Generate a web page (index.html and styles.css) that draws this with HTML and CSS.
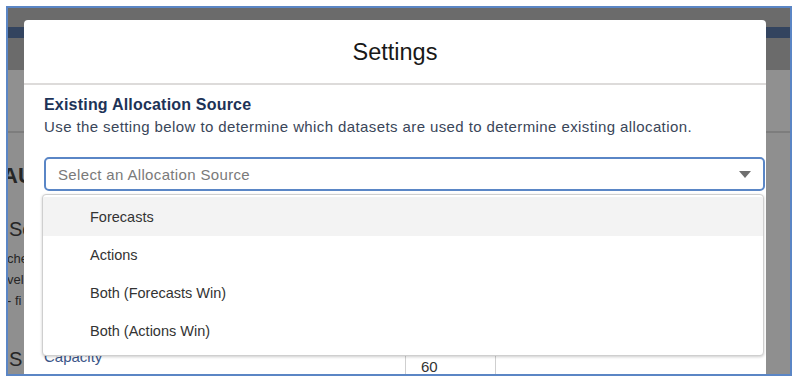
FILE: index.html
```html
<!DOCTYPE html>
<html lang="en">
<head>
  <meta charset="UTF-8">
  <meta name="viewport" content="width=device-width, initial-scale=1.0">
  <title>Settings</title>
  <link rel="stylesheet" href="styles.css">
</head>
<body>
  <div class="frame">

    <!-- page behind the modal (dimmed) -->
    <div class="page">
      <div class="page-top">
        <div class="page-nav"></div>
      </div>
      <div class="page-sub"></div>
      <div class="page-body">
        <div class="page-title">AU</div>
        <div class="page-section">Se</div>
        <div class="page-line">che</div>
        <div class="page-line">vel</div>
        <div class="page-line">- fi</div>
        <div class="page-section last">S</div>
      </div>
    </div>

    <!-- modal -->
    <div class="modal">
      <div class="modal-header">Settings</div>
      <div class="modal-body">
        <div class="field-title">Existing Allocation Source</div>
        <div class="field-help">Use the setting below to determine which datasets are used to determine existing allocation.</div>

        <div class="combo">
          <div class="combo-input">
            <span>Select an Allocation Source</span>
            <span class="combo-arrow"></span>
          </div>
          <ul class="combo-list">
            <li class="active">Forecasts</li>
            <li>Actions</li>
            <li>Both (Forecasts Win)</li>
            <li>Both (Actions Win)</li>
          </ul>
        </div>

        <div class="cap-row">
          <div class="cap-label">Capacity</div>
          <div class="cap-cell">60</div>
          <div class="cap-rest"></div>
        </div>
      </div>
    </div>

  </div>
</body>
</html>
```

FILE: styles.css
```css
body {
  margin: 0;
  background: #fff;
  font-family: "Liberation Sans", Arial, sans-serif;
}

.frame {
  position: relative;
  margin: 6px;
  width: 786px;
  height: 370px;
  box-sizing: border-box;
  border: 2px solid #5b86c5;
  overflow: hidden;
  background: #8f8f8f;
}

/* dimmed page */
.page-top {
  height: 62px;
  background: #6b6b6b;
  padding-top: 19px;
  box-sizing: border-box;
}

.page-nav {
  height: 11px;
  background: #33445f;
}

.page-sub {
  height: 61px;
  border-bottom: 2px solid #7d7d7d;
  background: #909090;
}

.page-body {
  padding-left: 1px;
  color: #262626;
}

.page-title {
  font-size: 22px;
  font-weight: bold;
  margin-top: 30px;
  margin-left: -7px;
}

.page-section {
  font-size: 20px;
  margin-top: 29px;
}

.page-line {
  font-size: 13px;
  line-height: 21px;
  margin-left: -2px;
}

.page-section + .page-line {
  margin-top: 7px;
}

.page-section.last {
  margin-top: 37px;
}

/* modal */
.modal {
  position: absolute;
  left: 16px;
  top: 12px;
  width: 742px;
  height: 380px;
  background: #fff;
  border-radius: 4px;
}

.modal-header {
  height: 65px;
  border-bottom: 2px solid #dddbda;
  display: flex;
  align-items: center;
  justify-content: center;
  padding-top: 2px;
  box-sizing: border-box;
  font-size: 23.5px;
  color: #181818;
}

.modal-body {
  padding: 10px 1px 0 20px;
}

.field-title {
  font-size: 16px;
  font-weight: bold;
  line-height: 20px;
  letter-spacing: 0.2px;
  color: #1d3357;
}

.field-help {
  font-size: 15px;
  line-height: 23px;
  letter-spacing: 0.4px;
  color: #3a4659;
}

.combo {
  position: relative;
  margin-top: 19px;
}

.combo-input {
  height: 34px;
  box-sizing: border-box;
  border: 2px solid #5a86c6;
  border-radius: 5px;
  display: flex;
  align-items: center;
  justify-content: space-between;
  padding: 0 12px 0 12px;
  font-size: 15px;
  letter-spacing: 0.35px;
  color: #7a7a7a;
}

.combo-arrow {
  width: 0;
  height: 0;
  border-left: 6px solid transparent;
  border-right: 6px solid transparent;
  border-top: 7px solid #6f6f6f;
}

.combo-list {
  position: absolute;
  z-index: 2;
  left: -2px;
  right: 1px;
  top: 37px;
  margin: 0;
  padding: 2px 0 5px;
  list-style: none;
  background: #fff;
  border: 1px solid #cfcfcf;
  border-radius: 4px;
  box-shadow: 0 1px 3px rgba(0, 0, 0, 0.2);
}

.combo-list li {
  height: 38px;
  display: flex;
  align-items: center;
  padding-left: 47px;
  font-size: 14.5px;
  color: #333;
}

.combo-list li.active {
  background: #f3f3f3;
  height: 39px;
}

.cap-row {
  display: flex;
  margin-top: 157px;
  height: 30px;
}

.cap-label {
  width: 361px;
  font-size: 15px;
  line-height: 18px;
  color: #3b5688;
}

.cap-cell {
  width: 74px;
  border-left: 1px solid #cfcfcf;
  border-right: 1px solid #cfcfcf;
  padding: 10px 0 0 15px;
  font-size: 15px;
  color: #333;
}
```
